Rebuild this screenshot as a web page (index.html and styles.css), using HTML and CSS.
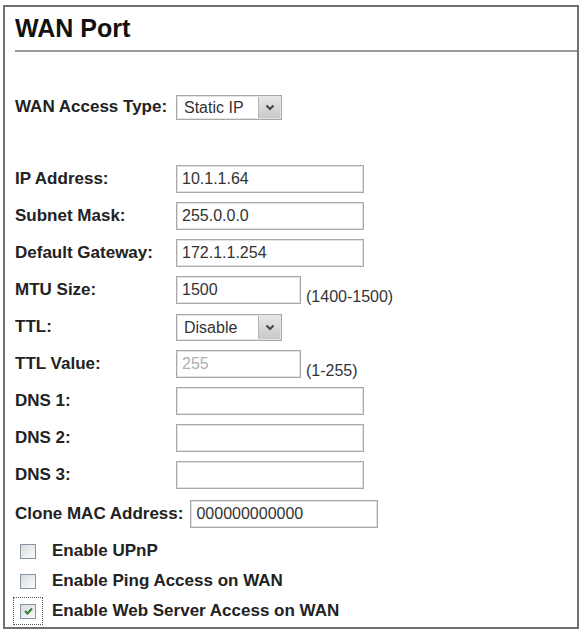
FILE: index.html
```html
<!DOCTYPE html>
<html lang="en">
<head>
  <meta charset="UTF-8" />
  <title>WAN Port</title>
  <link rel="stylesheet" href="styles.css">
</head>
<body>
  <div class="panel">
    <h1 class="title">WAN Port</h1>
    <div class="rule"></div>

    <!-- Access type -->
    <div class="access-row">
      <span class="lbl">WAN Access Type:</span>
      <div class="select sel-type">
        <span class="sel-text">Static IP</span>
        <span class="sel-btn"><svg width="10" height="7" viewBox="0 0 10 7"><path d="M1.5 1.5 L5 5 L8.5 1.5" fill="none" stroke="#444" stroke-width="2"/></svg></span>
      </div>
    </div>

    <!-- Address settings -->
    <div class="fields">
      <span class="lbl">IP Address:</span>
      <div class="ctl"><input class="inp wide" type="text" value="10.1.1.64"></div>

      <span class="lbl">Subnet Mask:</span>
      <div class="ctl"><input class="inp wide" type="text" value="255.0.0.0"></div>

      <span class="lbl">Default Gateway:</span>
      <div class="ctl"><input class="inp wide" type="text" value="172.1.1.254"></div>

      <span class="lbl">MTU Size:</span>
      <div class="ctl"><input class="inp short" type="text" value="1500"><span class="hint">(1400-1500)</span></div>

      <span class="lbl">TTL:</span>
      <div class="ctl">
        <div class="select sel-ttl">
          <span class="sel-text">Disable</span>
          <span class="sel-btn"><svg width="10" height="7" viewBox="0 0 10 7"><path d="M1.5 1.5 L5 5 L8.5 1.5" fill="none" stroke="#444" stroke-width="2"/></svg></span>
        </div>
      </div>

      <span class="lbl">TTL Value:</span>
      <div class="ctl"><input class="inp short" type="text" value="255" disabled><span class="hint">(1-255)</span></div>

      <span class="lbl">DNS 1:</span>
      <div class="ctl"><input class="inp wide" type="text" value=""></div>

      <span class="lbl">DNS 2:</span>
      <div class="ctl"><input class="inp wide" type="text" value=""></div>

      <span class="lbl">DNS 3:</span>
      <div class="ctl"><input class="inp wide" type="text" value=""></div>
    </div>

    <div class="mac-row">
      <span class="lbl">Clone MAC Address:</span>
      <input class="inp wide" type="text" value="000000000000">
    </div>

    <!-- Options -->
    <div class="checks">
      <div class="check-row"><span class="ring"><span class="box"></span></span><span class="lbl">Enable UPnP</span></div>
      <div class="check-row"><span class="ring"><span class="box"></span></span><span class="lbl">Enable Ping Access on WAN</span></div>
      <div class="check-row"><span class="ring focus"><span class="box"><svg width="11" height="10" viewBox="0 0 11 10"><path d="M2 5 L4.5 7.5 L9 2.5" fill="none" stroke="#2f8a3a" stroke-width="2.2"/></svg></span></span><span class="lbl">Enable Web Server Access on WAN</span></div>
    </div>
  </div>
</body>
</html>
```

FILE: styles.css
```css
body { margin: 0; background: #fff; font-family: "Liberation Sans", Arial, sans-serif; color: #1e1e1e; }
.panel { box-sizing: border-box; margin: 5px 0 0 3px; width: 576px; height: 624px; border: 2px solid #707070; padding-left: 10px; }
.title { margin: 0; padding-top: 6px; font-size: 25px; line-height: 30px; font-weight: bold; color: #111; }
.rule { height: 2px; background: #9a9a9a; margin-top: 7px; }
.lbl { font-size: 17px; font-weight: bold; color: #222; }

.access-row { display: flex; align-items: center; margin-top: 43px; height: 24px; }
.access-row .lbl { width: 161px; }

.select { box-sizing: border-box; display: flex; align-items: stretch; border: 1px solid #a8a8a8; box-shadow: inset 0 0 0 1px #e4e4e4; background: #fff; }
.sel-type { width: 106px; height: 25px; }
.sel-ttl { width: 106px; height: 27px; }
.sel-text { flex: 1; padding-left: 7px; font-size: 16px; line-height: 23px; color: #333; }
.sel-ttl .sel-text { line-height: 25px; }
.sel-btn { width: 21px; margin: 1px; display: flex; align-items: center; justify-content: center; background: linear-gradient(#e6e6e6, #c9c9c9); border-left: 1px solid #b4b4b4; }

.fields { display: grid; grid-template-columns: 161px auto; grid-auto-rows: 28px; row-gap: 9px; align-items: center; margin-top: 46px; }
.ctl { display: flex; align-items: center; }
.inp { box-sizing: border-box; height: 28px; border: 1px solid #a9a9a9; box-shadow: inset 0 0 0 1px #e2e2e2; padding: 0 5px; font-family: "Liberation Sans", Arial, sans-serif; font-size: 16px; color: #333; background: #fff; outline: none; }
.inp.wide { width: 188px; }
.inp.short { width: 125px; }
.inp:disabled { color: #b0b0b0; background: #fff; }
.hint { margin-left: 5px; margin-top: 14px; font-size: 16px; color: #333; }

.mac-row { display: flex; align-items: center; gap: 7px; margin-top: 11px; height: 28px; }

.checks { margin-top: 8px; }
.check-row { display: flex; align-items: center; height: 30px; }
.check-row .lbl { margin-left: 9px; }
.ring { box-sizing: border-box; width: 30px; height: 28px; display: flex; align-items: center; justify-content: center; border: 1px dotted transparent; margin-left: -2px; }
.ring.focus { border-color: #555; }
.box { box-sizing: border-box; width: 16px; height: 15px; border: 1px solid #8496a6; background: linear-gradient(135deg, #dcdcdc, #fafafa); display: flex; align-items: center; justify-content: center; }
```
